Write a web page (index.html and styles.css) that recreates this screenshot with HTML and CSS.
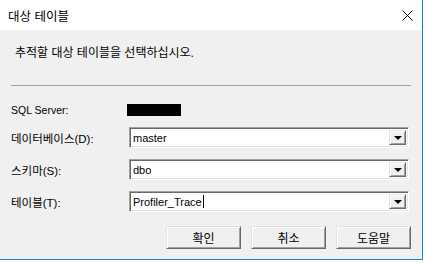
FILE: index.html
```html
<!DOCTYPE html>
<html lang="ko">
<head>
    <meta charset="UTF-8">
    <title>대상 테이블</title>
    <link rel="stylesheet" href="styles.css">
</head>
<body>
    <div class="dialog">
        <div class="titlebar">
            <span class="title">대상 테이블</span>
            <span class="close">
                <svg width="11" height="11" viewBox="0 0 11 11">
                    <path d="M0.5 0.5 L10.5 10.5 M10.5 0.5 L0.5 10.5" stroke="#000" stroke-width="1" fill="none"/>
                </svg>
            </span>
        </div>

        <div class="content">
            <p class="prompt">추적할 대상 테이블을 선택하십시오.</p>
            <div class="divider"></div>

            <div class="form">
                <span class="label label-latin">SQL Server:</span>
                <span class="server-name"></span>

                <span class="label">데이터베이스(D):</span>
                <div class="combo">
                    <span class="combo-text">master</span>
                    <span class="combo-btn"><span class="arrow"></span></span>
                </div>

                <span class="label">스키마(S):</span>
                <div class="combo">
                    <span class="combo-text">dbo</span>
                    <span class="combo-btn"><span class="arrow"></span></span>
                </div>

                <span class="label">테이블(T):</span>
                <div class="combo">
                    <span class="combo-text">Profiler_Trace<span class="caret"></span></span>
                    <span class="combo-btn"><span class="arrow"></span></span>
                </div>
            </div>

            <div class="buttons">
                <button class="btn">확인</button>
                <button class="btn">취소</button>
                <button class="btn">도움말</button>
            </div>
        </div>
    </div>
</body>
</html>
```

FILE: styles.css
```css
body {
    margin: 0;
    background: #fff;
    font-family: "Liberation Sans", "Noto Sans CJK KR", sans-serif;
    font-size: 11px;
    color: #000;
}
.dialog {
    width: 422px;
    height: 259px;
    border-right: 1px solid #1883d7;
    border-bottom: 1px solid #1883d7;
    display: flex;
    flex-direction: column;
}
.titlebar {
    height: 30px;
    background: #fff;
    display: flex;
    align-items: center;
    justify-content: space-between;
    padding: 0 9px 0 8px;
}
.title {
    font-family: "Noto Sans CJK KR", sans-serif;
    font-size: 12.5px;
}
.close {
    display: flex;
}
.content {
    flex: 1;
    background: #f0f0f0;
    padding: 16px 11px 0 11px;
}
.prompt {
    margin: 0 0 0 4px;
    line-height: 14px;
    font-size: 12px;
}
.divider {
    height: 1px;
    background: #a0a0a0;
    margin-top: 25px;
}
.form {
    display: grid;
    grid-template-columns: 118px 280px;
    row-gap: 11px;
    align-items: center;
    margin-top: 18px;
}
.label {
    font-size: 11.5px;
}
.label-latin {
    font-size: 10.5px;
}
.server-name {
    width: 54px;
    height: 12px;
    background: #000;
    margin-left: -2px;
}
.combo {
    height: 21px;
    box-sizing: border-box;
    background: #fff;
    border-top: 1px solid #a0a0a0;
    border-left: 1px solid #a0a0a0;
    border-bottom: 1px solid #fff;
    border-right: 1px solid #fff;
    box-shadow: inset 1px 1px #696969, inset -1px -1px #e3e3e3;
    display: flex;
    align-items: center;
    padding: 2px;
}
.combo-text {
    flex: 1;
    padding-left: 1px;
    display: flex;
    align-items: center;
}
.caret {
    width: 1px;
    height: 13px;
    background: #000;
    margin-left: 1px;
}
.combo-btn {
    width: 17px;
    height: 100%;
    box-sizing: border-box;
    background: #f0f0f0;
    border-top: 1px solid #e3e3e3;
    border-left: 1px solid #e3e3e3;
    border-bottom: 1px solid #696969;
    border-right: 1px solid #696969;
    box-shadow: inset 1px 1px #fff, inset -1px -1px #a0a0a0;
    display: flex;
    align-items: center;
    justify-content: center;
}
.arrow {
    width: 0;
    height: 0;
    border-left: 4px solid transparent;
    border-right: 4px solid transparent;
    border-top: 4px solid #000;
    margin-top: 1px;
}
.buttons {
    display: flex;
    justify-content: flex-end;
    gap: 10px;
    margin-top: 14px;
}
.btn {
    width: 75px;
    height: 23px;
    box-sizing: border-box;
    background: #f0f0f0;
    border-top: 1px solid #e3e3e3;
    border-left: 1px solid #e3e3e3;
    border-bottom: 1px solid #696969;
    border-right: 1px solid #696969;
    box-shadow: inset 1px 1px #fff, inset -1px -1px #a0a0a0;
    font-family: "Noto Sans CJK KR", sans-serif;
    font-size: 12px;
    color: #000;
    padding: 0;
}
```
